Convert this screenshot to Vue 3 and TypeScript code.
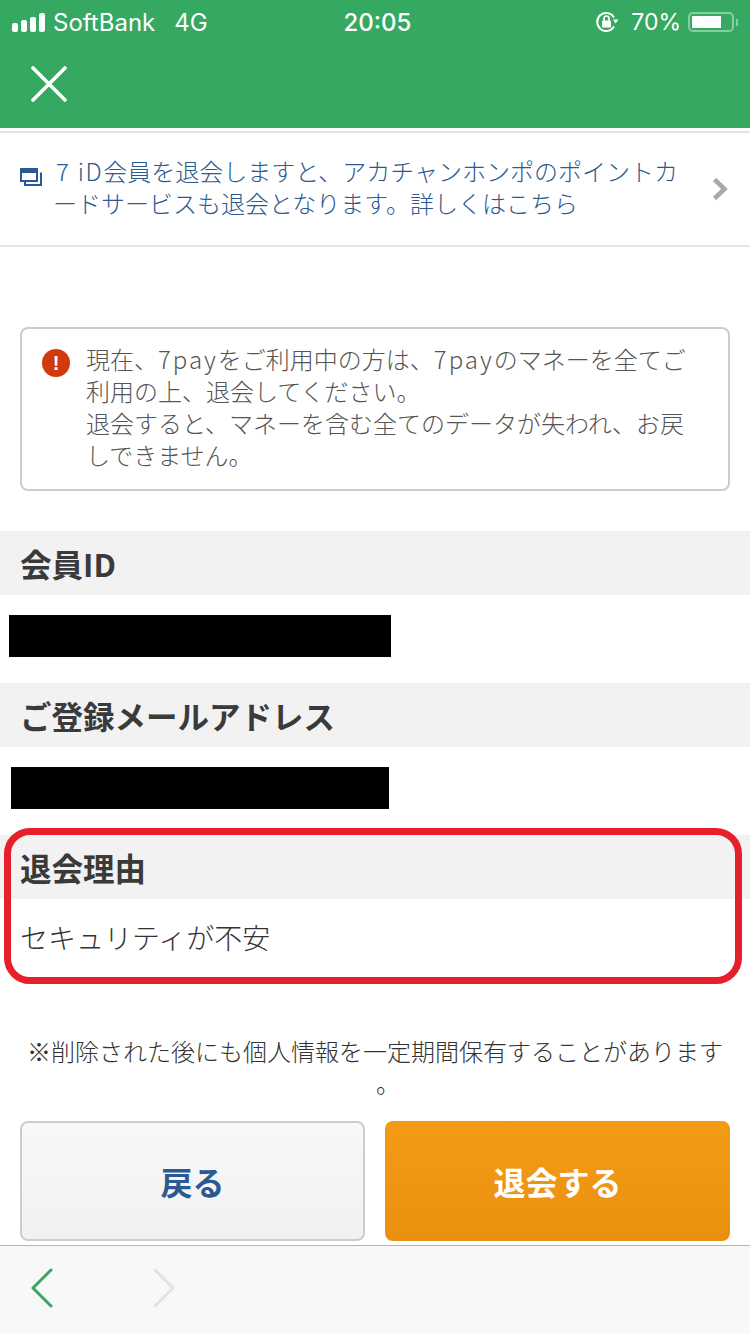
<template>
  <div class="page">
    <header class="top">
      <div class="status">
        <div class="status-left">
          <div class="signal">
            <i v-for="h in bars" :key="h" :style="{ height: h + 'px' }"></i>
          </div>
          <span class="carrier">SoftBank</span>
          <span class="net">4G</span>
        </div>
        <span class="time">20:05</span>
        <div class="status-right">
          <svg class="lock" width="24" height="22" viewBox="0 0 24 22">
            <path d="M19 15.500A9 9 0 1 1 19 6.500" fill="none" stroke="#fff" stroke-width="2" />
            <path d="M18 8.500h5.500l-3 4z" fill="#fff" />
            <rect x="7" y="9.500" width="9" height="7" rx="1" fill="#fff" />
            <path d="M9 10V7.500a2.500 2.500 0 0 1 5 0V10" fill="none" stroke="#fff" stroke-width="1.600" />
          </svg>
          <span class="pct">70%</span>
          <div class="battery"><div class="battery-fill"></div></div>
          <div class="battery-nub"></div>
        </div>
      </div>
      <div class="nav">
        <svg width="36" height="36" viewBox="0 0 36 36">
          <path d="M2 2L34 34M34 2L2 34" stroke="#fff" stroke-width="3.600" stroke-linecap="round" />
        </svg>
      </div>
    </header>

    <a class="notice">
      <svg class="win" width="22" height="18" viewBox="0 0 22 18">
        <rect x="0" y="0" width="18" height="14" fill="#2a5a94" />
        <rect x="2" y="5" width="14" height="7" fill="#fff" />
        <path d="M20 5.500h1v11.500H5V14" fill="none" stroke="#2a5a94" stroke-width="2" />
      </svg>
      <p class="notice-text">
        <span class="seven">7</span><span class="id">iD</span>会員を退会しますと、アカチャンホンポのポイントカ<br />ードサービスも退会となります。詳しくはこちら
      </p>
      <svg class="more" width="16" height="24" viewBox="0 0 16 24">
        <path d="M2.500 2.500L12.500 12L2.500 21.500" fill="none" stroke="#a9a9a9" stroke-width="4.500" />
      </svg>
    </a>

    <div class="alert">
      <div class="alert-icon">!</div>
      <p class="alert-text">
        現在、<span class="latin">7pay</span>をご利用中の方は、<span class="latin">7pay</span>のマネーを全てご利用の上、退会してください。<br />
        退会すると、マネーを含む全てのデータが失われ、お戻しできません。
      </p>
    </div>

    <section>
      <h2>会員ID</h2>
      <div class="row"><div class="mask mask-id"></div></div>
    </section>
    <section>
      <h2>ご登録メールアドレス</h2>
      <div class="row"><div class="mask mask-mail"></div></div>
    </section>
    <section class="reason">
      <h2>退会理由</h2>
      <p class="reason-value">セキュリティが不安</p>
      <div class="highlight"></div>
    </section>

    <p class="caution">※削除された後にも個人情報を一定期間保有することがあります<br /><span class="maru">。</span></p>

    <div class="buttons">
      <button class="btn btn-back">戻る</button>
      <button class="btn btn-leave">退会する</button>
    </div>

    <footer class="toolbar">
      <svg width="24" height="40" viewBox="0 0 24 40">
        <path d="M21 2L3 20L21 38" fill="none" stroke="#38a566" stroke-width="3" stroke-linecap="round" stroke-linejoin="round" />
      </svg>
      <svg width="24" height="40" viewBox="0 0 24 40">
        <path d="M3 2L21 20L3 38" fill="none" stroke="#e2e2e2" stroke-width="3" stroke-linecap="round" stroke-linejoin="round" />
      </svg>
    </footer>
  </div>
</template>

<script setup lang="ts">
// 電波アイコンの高さ
const bars: number[] = [9, 12, 15, 19];
</script>

<style>
html,
body {
  background: #fff;
}
</style>

<style scoped>
.page {
  width: 750px;
  height: 1334px;
  overflow: hidden;
  display: flex;
  flex-direction: column;
  font-family: "Noto Sans CJK JP", sans-serif;
  color: #333;
  background: #fff;
}

p,
h2 {
  margin: 0;
}

.top {
  height: 128px;
  background: #35a862;
  color: #fff;
}

.status {
  height: 44px;
  padding: 0 12px;
  display: grid;
  grid-template-columns: 1fr auto 1fr;
  align-items: center;
  font-family: Inter, sans-serif;
  font-size: 24px;
}

.status-left,
.status-right {
  display: flex;
  align-items: center;
}

.status-right {
  justify-content: flex-end;
}

.signal {
  display: flex;
  align-items: flex-end;
  gap: 3px;
  margin-right: 8px;
}

.signal i {
  width: 6px;
  background: #fff;
  border-radius: 2px;
}

.net {
  margin-left: 19px;
}

.time {
  font-weight: 500;
  margin-left: 5px;
}

.lock {
  margin-right: 12px;
}

.pct {
  margin-right: 7px;
  font-size: 23px;
}

.battery {
  width: 46px;
  height: 20px;
  box-sizing: border-box;
  border: 2px solid #86cda0;
  border-radius: 5px;
  padding: 2px;
}

.battery-fill {
  width: 29px;
  height: 100%;
  background: #fff;
}

.battery-nub {
  width: 2px;
  height: 7px;
  margin-left: 2px;
  background: #86cda0;
}

.nav {
  padding: 22px 0 0 31px;
  display: flex;
}

.notice {
  margin-top: 3px;
  height: 116px;
  box-sizing: border-box;
  border-top: 2px solid #e5e5e5;
  border-bottom: 2px solid #e5e5e5;
  padding-left: 20px;
  display: flex;
  align-items: center;
  color: #2b5a92;
}

.win {
  flex: none;
  margin: -24px 11px 0 0;
}

.notice-text {
  flex: 1;
  font-size: 24px;
  line-height: 32px;
  font-weight: 300;
  margin-top: -4px;
  white-space: nowrap;
}

.seven {
  margin-left: 3px;
  padding-right: 9px;
}

.id {
  letter-spacing: 1.500px;
}

.more {
  flex: none;
  margin-right: 22px;
}

.alert {
  margin: 80px 20px 0;
  height: 164px;
  box-sizing: border-box;
  border: 2px solid #ccc;
  border-radius: 8px;
  padding: 14px 20px 0 20px;
  display: flex;
  gap: 16px;
}

.alert-icon {
  flex: none;
  width: 28px;
  height: 28px;
  margin-top: 6px;
  border-radius: 50%;
  background: #d03a0c;
  color: #fff;
  font: bold 20px/28px "Liberation Sans", sans-serif;
  text-align: center;
}

.alert-text {
  font-size: 24px;
  line-height: 32px;
  font-weight: 300;
  color: #555;
}

.latin {
  letter-spacing: 2px;
}

.alert + section {
  margin-top: 40px;
}

h2 {
  height: 64px;
  padding: 0 20px;
  background: #f2f2f2;
  font-size: 31.500px;
  line-height: 64px;
  font-weight: 700;
  color: #3a3a3a;
  white-space: nowrap;
}

.row {
  height: 88px;
  padding-top: 20px;
  box-sizing: border-box;
}

.mask {
  height: 42px;
  background: #000;
}

.mask-id {
  width: 382px;
  margin-left: 9px;
}

.mask-mail {
  width: 378px;
  margin-left: 11px;
}

.reason {
  position: relative;
}

.reason-value {
  padding: 18px 20px 0;
  height: 85px;
  box-sizing: border-box;
  font-size: 28px;
  line-height: 40px;
  font-weight: 300;
}

.highlight {
  position: absolute;
  left: 4px;
  top: -7px;
  width: 738px;
  height: 156px;
  box-sizing: border-box;
  border: 7px solid #e61f2b;
  border-radius: 26px;
}

.caution {
  margin-top: 51px;
  font-size: 24px;
  line-height: 32px;
  font-weight: 300;
  text-align: center;
  white-space: nowrap;
}

.maru {
  margin-left: 26px;
}

.buttons {
  margin-top: 22px;
  padding: 0 20px;
  display: flex;
  gap: 20px;
}

.btn {
  height: 120px;
  border-radius: 8px;
  box-sizing: border-box;
  font-family: inherit;
  font-size: 32px;
  font-weight: 700;
  padding: 0;
}

.btn-back {
  width: 345px;
  border: 2px solid #ccc;
  background: linear-gradient(#f8f8f8, #f1f1f1);
  color: #2b5a92;
}

.btn-leave {
  width: 345px;
  border: none;
  background: linear-gradient(#f49b15, #ea9010);
  color: #fff;
}

.toolbar {
  margin-top: 4px;
  height: 89px;
  box-sizing: border-box;
  border-top: 1px solid #b4b4b8;
  background: #f8f8f8;
  padding: 0 0 4px 30px;
  display: flex;
  align-items: center;
  gap: 98px;
}
</style>
